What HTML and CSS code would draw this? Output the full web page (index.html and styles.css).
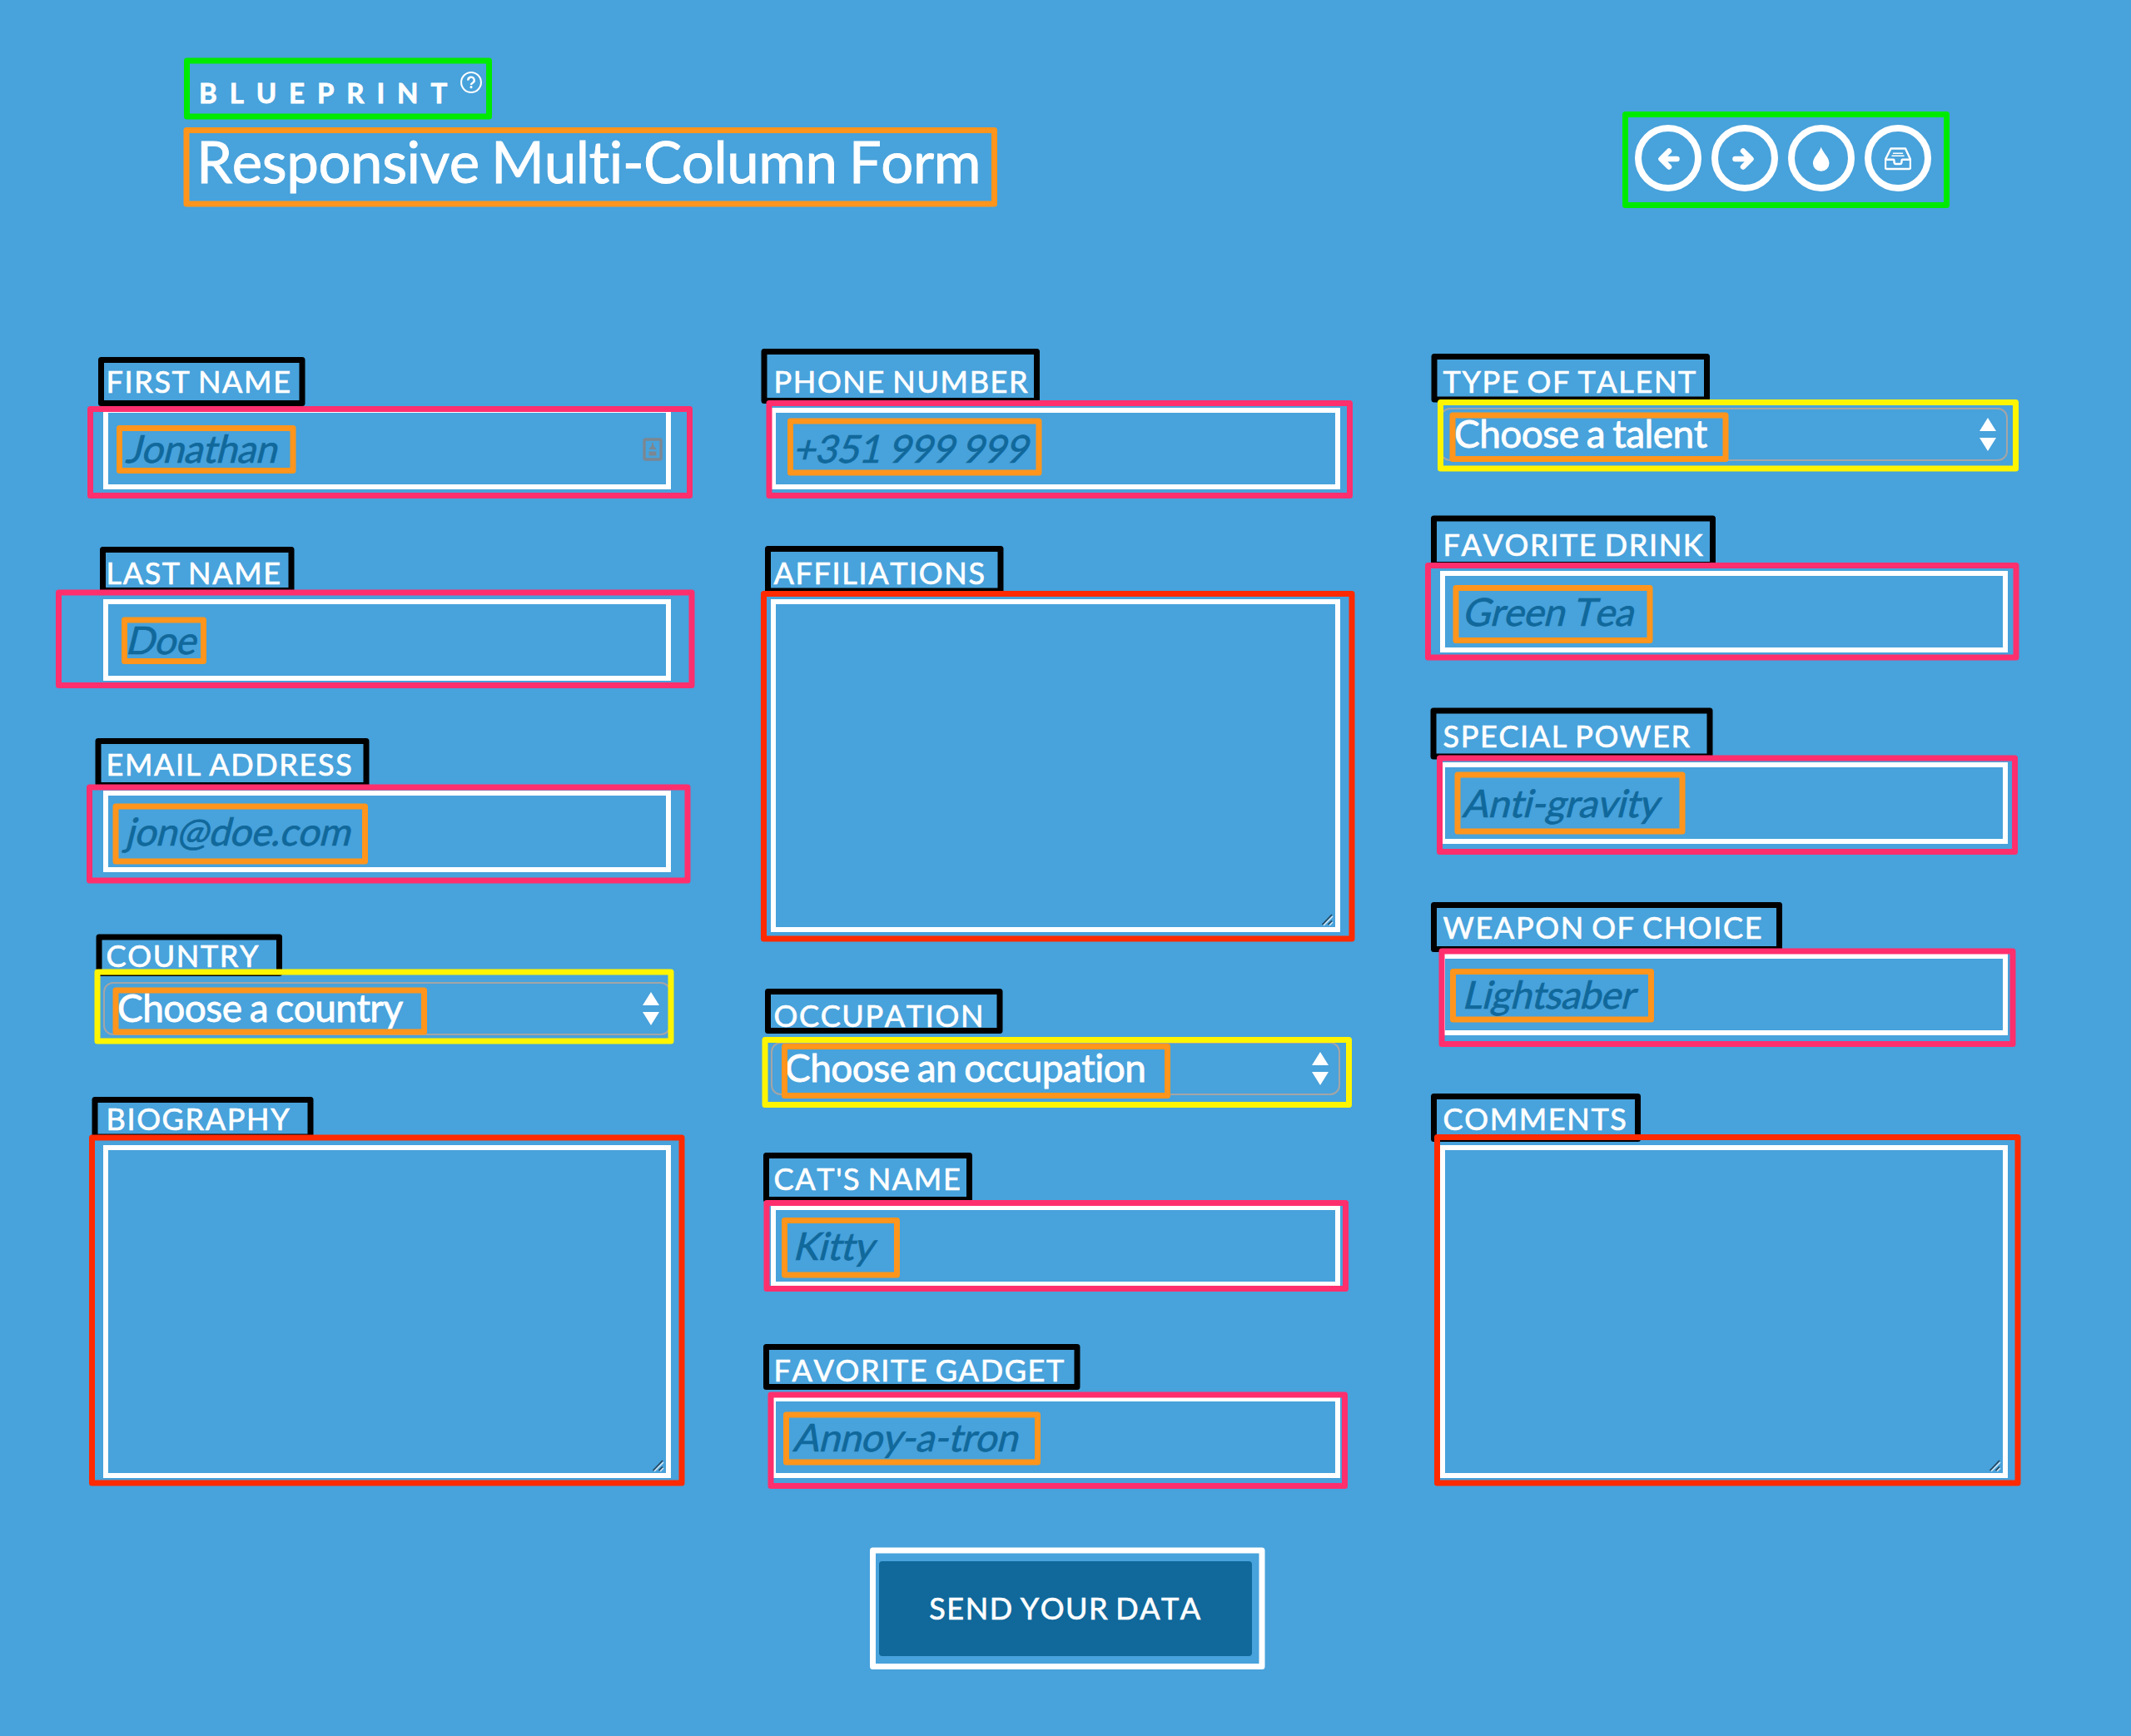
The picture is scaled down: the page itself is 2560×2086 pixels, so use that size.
FILE: index.html
```html
<!DOCTYPE html>
<html lang="en">
<head>
<meta charset="utf-8">
<title>Responsive Multi-Column Form</title>
<link rel="stylesheet" href="styles.css">
</head>
<body>
<div class="page">
  <header class="header">
    <div class="heading">
      <div class="brand"><span class="brand-name">Blueprint</span><svg class="help" viewBox="0 0 24 24"><circle cx="12" cy="12" r="11" fill="none" stroke="#fff" stroke-width="1.900"/><path d="M8.600 9.800a3.400 3.400 0 1 1 5.200 2.600c-1.200.7-1.800 1.200-1.800 2.300" fill="none" stroke="#fff" stroke-width="2.200"/><circle cx="12" cy="17.200" r="1.400" fill="#fff"/></svg></div>
      <h1 class="title">Responsive Multi-Column Form</h1>
    </div>
    <nav class="nav">
      <a class="nav-link"><svg viewBox="0 0 32 32"><path d="M17 7 7.500 16.500 17 26M8 16.500H26.500" transform="translate(0 .5)"/></svg></a>
      <a class="nav-link"><svg viewBox="0 0 32 32"><path d="M14 7 23.500 16.500 14 26M23 16.500H4.500" transform="translate(0 .5)"/></svg></a>
      <a class="nav-link"><svg viewBox="0 0 32 32"><path class="solid" d="M15.700 2.500C17 8.500 25.500 15 25.500 22a9.800 9.800 0 0 1-19.600 0C5.900 15 14.400 8.500 15.700 2.500Z"/></svg></a>
      <a class="nav-link"><svg viewBox="0 0 32 32"><g class="thin"><path d="M1 17.500 7.500 4.500H25L31 17.500V27.500Q31 29 29.500 29H2.500Q1 29 1 27.500ZM1 17.800H10.500Q11.500 17.800 11.500 19V20.500Q11.500 23 13.500 23H18.500Q20.500 23 20.500 20.500V19Q20.500 17.800 21.500 17.800H31"/><path class="hair" d="M10.500 10.200H21.500M9 13.300H23"/></g></svg></a>
    </nav>
  </header>

  <form class="form">
    <div class="column">
      <div class="field"><label class="label">First Name</label><div class="input control"><span class="hint">Jonathan</span><svg class="autofill" viewBox="0 0 24 28"><rect x="2" y="2" width="20" height="24" rx="1.500"/><path class="fill" d="M11 6h2v3l3.500 5h-9L11 9ZM7.500 16.500h9v5h-9Z"/></svg></div></div>
      <div class="field"><label class="label">Last Name</label><div class="input"><span class="hint">Doe</span></div></div>
      <div class="field"><label class="label">Email Address</label><div class="input"><span class="hint">jon@doe.com</span></div></div>
      <div class="field"><label class="label">Country</label><div class="control"><select class="select"><option>Choose a country</option></select><svg class="arrows" viewBox="0 0 20 40"><path d="M10 0 20 16H0ZM0 24H20L10 40Z"/></svg></div></div>
      <div class="field"><label class="label">Biography</label><div class="control"><textarea class="textarea"></textarea><svg class="grip" viewBox="0 0 16 16"><path class="shade" d="M3 15 14 4M10 15 14 11"/><path d="M1.500 14 13 2M8.500 14 13 9.500"/></svg></div></div>
    </div>
    <div class="column">
      <div class="field"><label class="label">Phone Number</label><div class="input"><span class="hint">+351 999 999</span></div></div>
      <div class="field"><label class="label">Affiliations</label><div class="control"><textarea class="textarea"></textarea><svg class="grip" viewBox="0 0 16 16"><path class="shade" d="M3 15 14 4M10 15 14 11"/><path d="M1.500 14 13 2M8.500 14 13 9.500"/></svg></div></div>
      <div class="field"><label class="label">Occupation</label><div class="control"><select class="select"><option>Choose an occupation</option></select><svg class="arrows" viewBox="0 0 20 40"><path d="M10 0 20 16H0ZM0 24H20L10 40Z"/></svg></div></div>
      <div class="field"><label class="label">Cat's Name</label><div class="input"><span class="hint">Kitty</span></div></div>
      <div class="field"><label class="label">Favorite Gadget</label><div class="input"><span class="hint">Annoy-a-tron</span></div></div>
    </div>
    <div class="column">
      <div class="field"><label class="label">Type of Talent</label><div class="control"><select class="select"><option>Choose a talent</option></select><svg class="arrows" viewBox="0 0 20 40"><path d="M10 0 20 16H0ZM0 24H20L10 40Z"/></svg></div></div>
      <div class="field"><label class="label">Favorite Drink</label><div class="input"><span class="hint">Green Tea</span></div></div>
      <div class="field"><label class="label">Special Power</label><div class="input"><span class="hint">Anti-gravity</span></div></div>
      <div class="field"><label class="label">Weapon of Choice</label><div class="input"><span class="hint">Lightsaber</span></div></div>
      <div class="field"><label class="label">Comments</label><div class="control"><textarea class="textarea"></textarea><svg class="grip" viewBox="0 0 16 16"><path class="shade" d="M3 15 14 4M10 15 14 11"/><path d="M1.500 14 13 2M8.500 14 13 9.500"/></svg></div></div>
    </div>
  </form>
  <div class="submit"><button class="send" type="button">Send Your Data</button></div>

  <!-- Annotation frames, grouped by kind of element -->
  <svg class="marks" viewBox="0 0 2560 2086">
    <g class="m-label">
      <rect x="121.500" y="432.500" width="241.500" height="52"/>
      <rect x="123.500" y="660.500" width="226.500" height="49"/>
      <rect x="118" y="890.500" width="322" height="53"/>
      <rect x="119" y="1126" width="216.500" height="43.500"/>
      <rect x="114" y="1321.500" width="259" height="44.500"/>
      <rect x="918" y="422.500" width="327.500" height="59"/>
      <rect x="922.500" y="659.500" width="279.500" height="50.500"/>
      <rect x="922.500" y="1191.500" width="278.500" height="47"/>
      <rect x="920.500" y="1388.500" width="244" height="53"/>
      <rect x="920.500" y="1618.500" width="373.500" height="48"/>
      <rect x="1723" y="428.500" width="327.500" height="51.500"/>
      <rect x="1722.500" y="623" width="335" height="55.500"/>
      <rect x="1722" y="854" width="332" height="55"/>
      <rect x="1722.500" y="1087.500" width="415" height="53"/>
      <rect x="1722.500" y="1317.500" width="245" height="51"/>
    </g>
    <g class="m-input">
      <rect x="108.500" y="491.500" width="720" height="104"/>
      <rect x="70.500" y="712" width="760.500" height="111.500"/>
      <rect x="107.500" y="946" width="718.500" height="112"/>
      <rect x="924" y="484.500" width="697.500" height="111"/>
      <rect x="921" y="1445.500" width="695.500" height="103"/>
      <rect x="926" y="1676" width="689.500" height="109.500"/>
      <rect x="1715.500" y="679.500" width="706.500" height="110.500"/>
      <rect x="1729.500" y="911" width="691" height="112.500"/>
      <rect x="1732" y="1143" width="686" height="111.500"/>
    </g>
    <g class="m-select">
      <rect x="117" y="1168" width="689" height="83"/>
      <rect x="919" y="1249.500" width="701.500" height="78"/>
      <rect x="1730.500" y="483.500" width="691" height="79.500"/>
    </g>
    <g class="m-textarea">
      <rect x="110.500" y="1367" width="708.500" height="415"/>
      <rect x="917.500" y="713.500" width="706.500" height="414.500"/>
      <rect x="1726.500" y="1366.500" width="697.500" height="415.500"/>
    </g>
    <g class="m-value">
      <rect x="224" y="156.500" width="970.500" height="88.500"/>
      <rect x="143.500" y="514.500" width="208.500" height="51"/>
      <rect x="149.500" y="745" width="95" height="49.500"/>
      <rect x="139" y="969" width="299.500" height="66"/>
      <rect x="139" y="1190" width="370.500" height="50"/>
      <rect x="949.500" y="506" width="298.500" height="62"/>
      <rect x="942.500" y="1257.500" width="460" height="59"/>
      <rect x="942.500" y="1466.500" width="135" height="65.500"/>
      <rect x="944.500" y="1700" width="302" height="57"/>
      <rect x="1745" y="499" width="328" height="52.500"/>
      <rect x="1749" y="706.500" width="233" height="63"/>
      <rect x="1751" y="931" width="270" height="68"/>
      <rect x="1745.500" y="1167.500" width="238" height="57.500"/>
    </g>
    <g class="m-nav">
      <rect x="224.500" y="73" width="363" height="67"/>
      <rect x="1952.500" y="137.500" width="386" height="109"/>
    </g>
    <g class="m-submit"><rect x="1048.500" y="1863" width="467.500" height="139.500"/></g>
  </svg>
</div>
</body>
</html>
```
FILE: styles.css
```css
* { box-sizing: border-box; }

body {
  margin: 0;
  background: #48a2db;
  color: #fff;
  font-family: Lato, "Liberation Sans", sans-serif;
  font-kerning: none;
  font-variant-ligatures: none;
}

.page {
  position: relative;
  width: 2560px;
  height: 2086px;
  overflow: hidden;
}

.header {
  display: flex;
  justify-content: space-between;
  width: 2084px;
  height: 436px;
  margin: 0 auto;
  padding-top: 91px;
}

.brand { display: flex; align-items: flex-start; height: 64px; padding-left: 1px; }
.brand-name {
  font-size: 33px;
  line-height: 40px;
  font-weight: 700;
  letter-spacing: 14.9px;
  text-transform: uppercase;
  -webkit-text-stroke: 0.8px #fff;
}
.help { width: 26px; height: 26px; margin: -5px 0 0 1px; }

.title {
  margin: 0 0 0 -2px;
  font-size: 69px;
  line-height: 78px;
  font-weight: 400;
  letter-spacing: -0.45px;
  word-spacing: -3px;
  -webkit-text-stroke: 0.9px #fff;
}

.nav { display: flex; gap: 12px; padding-top: 59px; margin-right: 2px; height: 139px; }
.nav-link {
  display: flex;
  align-items: center;
  justify-content: center;
  width: 80px;
  height: 80px;
  border: 8px solid #fff;
  border-radius: 50%;
}
.nav-link svg {
  width: 32px;
  height: 32px;
  fill: none;
  stroke: #fff;
  stroke-width: 6.5;
  stroke-linecap: round;
  stroke-linejoin: round;
}
.nav-link .solid { fill: #fff; stroke: none; }
.nav-link .thin { stroke-width: 2.4; }
.nav-link .hair { stroke-width: 1.6; }

.form {
  display: grid;
  grid-template-columns: 682px 684px 682px;
  column-gap: 120px;
  width: 2288px;
  margin-left: 124px;
}
.column { display: flex; flex-direction: column; gap: 78px; }
.field { display: flex; flex-direction: column; gap: 10px; }
.label {
  padding-left: 3.5px;
  font-size: 36px;
  line-height: 44px;
  letter-spacing: 1.65px;
  word-spacing: -2.5px;
  text-transform: uppercase;
  white-space: nowrap;
  -webkit-text-stroke: 0.7px #fff;
}
.control { position: relative; display: flex; }

.input, .select, .textarea {
  width: 100%;
  margin: 0;
  background: transparent;
  color: #fff;
  font: 400 46px Lato, "Liberation Sans", sans-serif;
  font-kerning: none;
  font-variant-ligatures: none;
  letter-spacing: -0.4px;
  word-spacing: -2px;
  outline: none;
}
.input {
  display: flex;
  align-items: center;
  height: 98px;
  padding: 0 19px 2px 20px;
  border: 6px solid #fff;
}
.hint {
  color: #10689b;
  transform: skewX(-14deg);
  transform-origin: 0 82%;
  white-space: nowrap;
  -webkit-text-stroke: 0.7px #10689b;
}
.textarea { display: block; height: 400px; border: 6px solid #fff; resize: none; }
.select {
  height: 64px;
  padding: 0 60px 4px 15px;
  border: 2px solid #a5a5a5;
  border-radius: 12px;
  appearance: none;
  letter-spacing: -0.55px;
  -webkit-text-stroke: 0.8px #fff;
}

.arrows { position: absolute; right: 14px; top: 12px; width: 20px; height: 40px; fill: #fff; }
.autofill { position: absolute; right: 4px; top: 30px; width: 24px; height: 28px; fill: none; stroke: #7c8791; stroke-width: 3.4; }
.autofill .fill { fill: #7c8791; stroke: none; }
.grip { position: absolute; right: 7px; bottom: 7px; width: 16px; height: 16px; fill: none; stroke: #24445a; stroke-width: 1.6; }
.grip .shade { stroke: #d5e6f2; }

.submit { display: flex; justify-content: center; padding-top: 100px; }
.send {
  width: 448px;
  height: 114px;
  padding: 0 0 2px;
  border: 0;
  border-radius: 4px;
  background: #10689b;
  color: #fff;
  font: 400 36px Lato, "Liberation Sans", sans-serif;
  font-kerning: none;
  letter-spacing: 1.5px;
  word-spacing: -2.5px;
  text-transform: uppercase;
  -webkit-text-stroke: 0.7px #fff;
}

.marks {
  position: absolute;
  inset: 0;
  width: 2560px;
  height: 2086px;
  fill: none;
  stroke-width: 7;
  stroke-linejoin: round;
  pointer-events: none;
}
.m-label { stroke: #000; }
.m-input { stroke: #ff2f6e; }
.m-select { stroke: #fff500; }
.m-textarea { stroke: #ff2a00; }
.m-value { stroke: #ff951c; }
.m-nav { stroke: #00ea00; }
.m-submit { stroke: #fff; }
```
